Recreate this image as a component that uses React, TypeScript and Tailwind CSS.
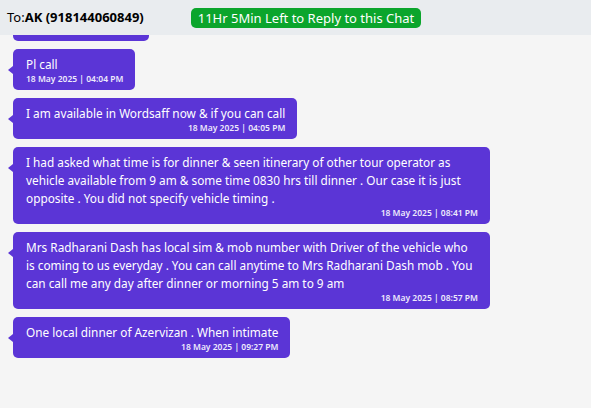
const messages = [
  { text: "Ok will talk to driver", time: "18 May 2025 | 04:01 PM", hidden: true },
  { text: "Pl call", time: "18 May 2025 | 04:04 PM" },
  { text: "I am available in Wordsaff now & if you can call", time: "18 May 2025 | 04:05 PM" },
  {
    text: "I had asked what time is for dinner & seen itinerary of other tour operator as vehicle available from 9 am & some time 0830 hrs till dinner . Our case it is just opposite . You did not specify vehicle timing .",
    time: "18 May 2025 | 08:41 PM",
  },
  {
    text: "Mrs Radharani Dash has local sim & mob number with Driver of the vehicle who is coming to us everyday . You can call anytime to Mrs Radharani Dash mob . You can call me any day after dinner or morning 5 am to 9 am",
    time: "18 May 2025 | 08:57 PM",
  },
  { text: "One local dinner of Azervizan . When intimate", time: "18 May 2025 | 09:27 PM" },
];

const Bubble = ({ text, time, hidden }: { text: string; time: string; hidden?: boolean }) => (
  <div className={`relative self-start max-w-[477px] rounded-[5px] bg-[#5b35d6] pl-[13px] pr-[12px] pt-[6px] pb-[5px] text-white ${hidden ? "-mt-[35px]" : ""}`}>
    <span className="absolute left-[-5px] top-[17px] h-0 w-0 border-y-[4px] border-r-[5px] border-y-transparent border-r-[#5b35d6]" />
    <div className={hidden ? "invisible" : ""}>
      <p className="text-[11.8px] leading-[18px]">{text}</p>
      <p className="text-right text-[8.5px] font-semibold leading-[12px] text-[#eeeafc]">{time}</p>
    </div>
  </div>
);

export default function App() {
  return (
    <div className="flex h-[408px] w-[591px] flex-col overflow-hidden bg-[#f5f5f5] font-['Noto_Sans',sans-serif]">
      <div className="relative z-10 flex h-[35px] shrink-0 items-center bg-[#e9ecef] pl-[7px]">
        <span className="text-[13px] text-black">
          To:<span className="font-bold">AK (918144060849)</span>
        </span>
        <span className="ml-[47px] rounded-[5px] bg-[#0ba52c] px-[7px] text-[13px] leading-[20px] text-white">
          11Hr 5Min Left to Reply to this Chat
        </span>
      </div>
      <div className="flex flex-1 flex-col gap-[8px] overflow-hidden pl-[13px]">
        {messages.map((m, i) => (
          <Bubble key={i} {...m} />
        ))}
      </div>
    </div>
  );
}
